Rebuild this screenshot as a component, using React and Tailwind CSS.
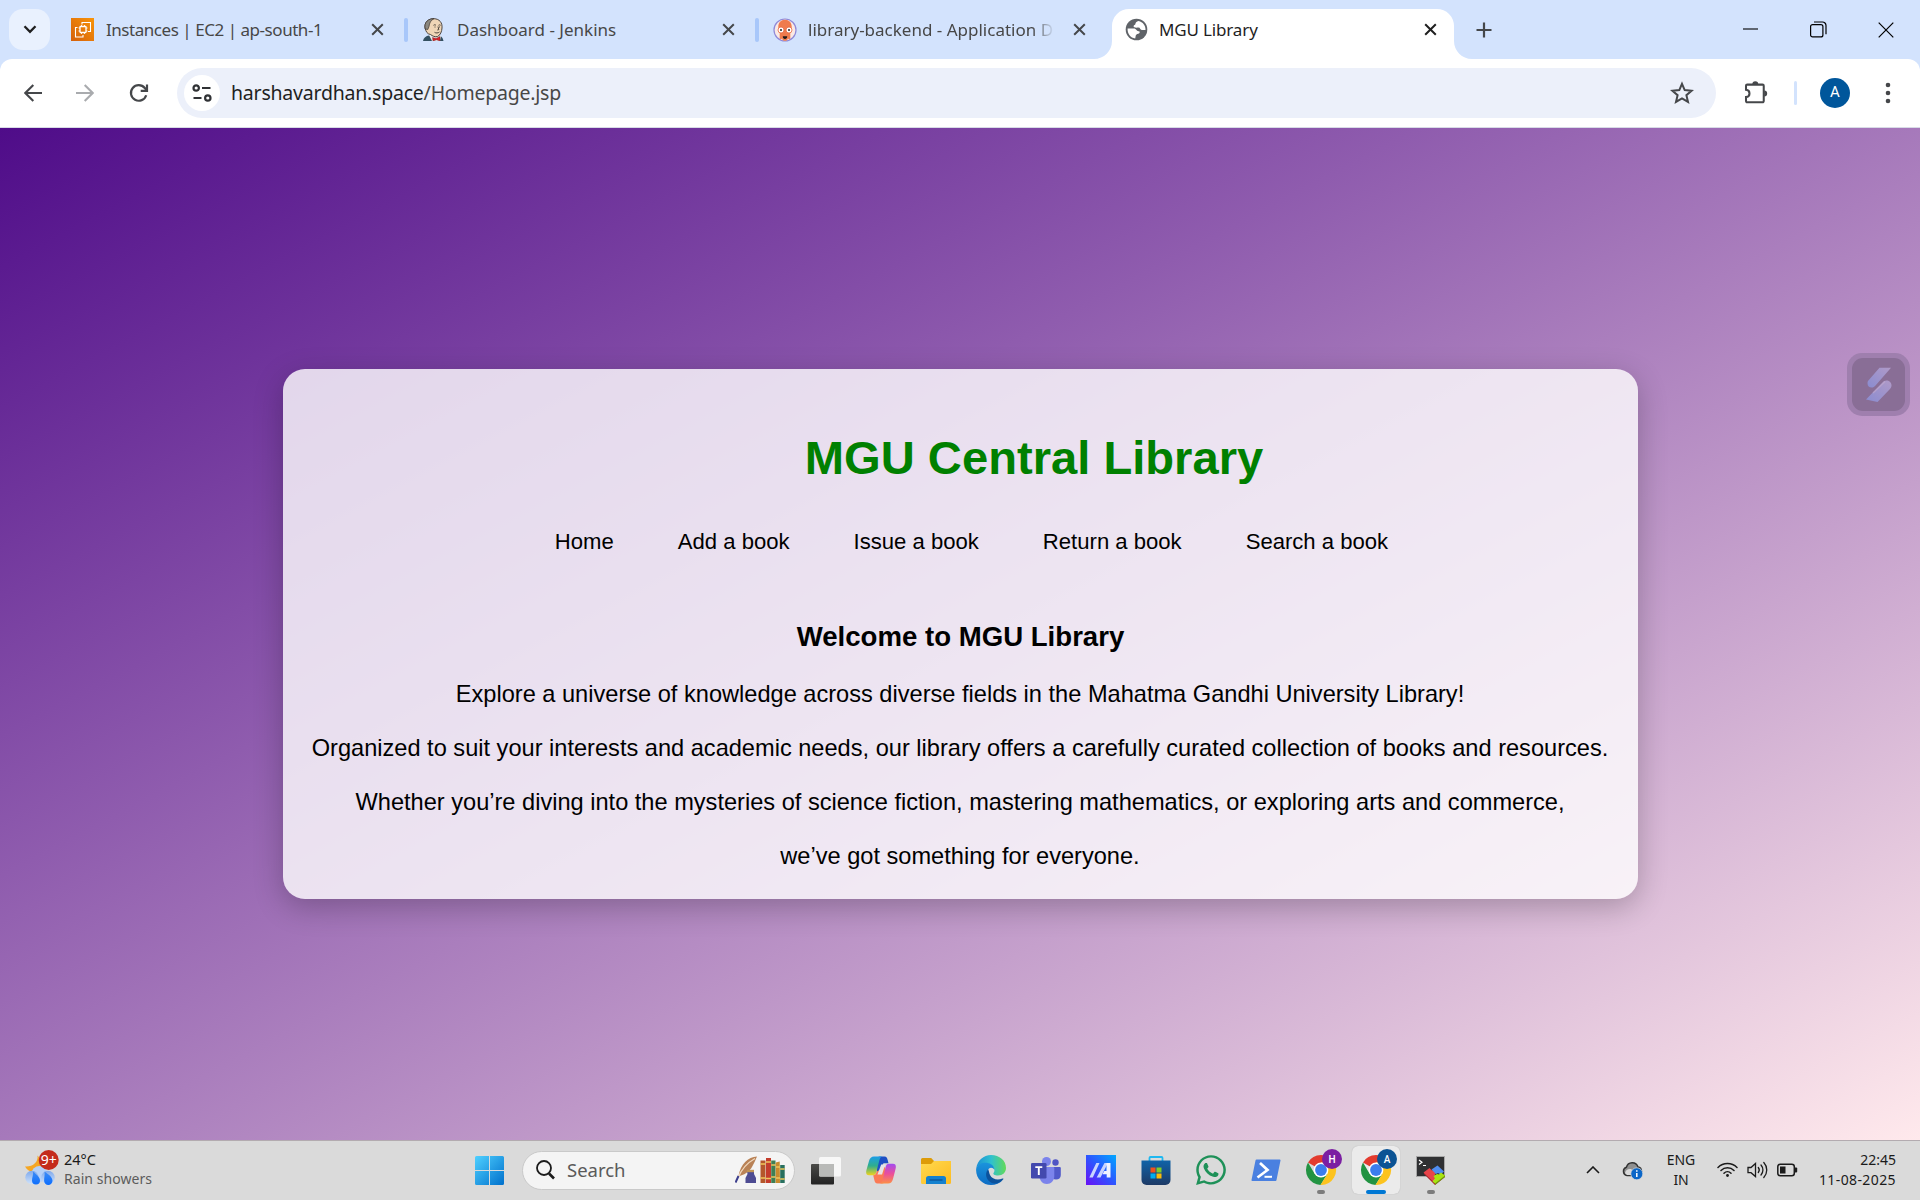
import React from "react";
import { FaWhatsapp } from "react-icons/fa";

const UI = "font-['Noto_Sans','Open_Sans',sans-serif]";

/* ---------- favicons ---------- */
const Ec2Icon = () => (
  <svg width="23" height="23" viewBox="0 0 23 23">
    <defs>
      <linearGradient id="ec2" x1="0" y1="1" x2="1" y2="0">
        <stop offset="0" stopColor="#d4600c" />
        <stop offset="1" stopColor="#f99408" />
      </linearGradient>
    </defs>
    <rect width="23" height="23" fill="url(#ec2)" />
    <g fill="none" stroke="#fff" strokeWidth="1.1">
      <path d="M11 6.5V4.5h8.5v9h-2.5M6.5 9.500H4.500v9.500h7.500v-2" />
      <rect x="9" y="8.500" width="6" height="6" rx=".5" strokeWidth="1.3" />
      <path d="M10.500 8.500V7M13.500 8.500V7M10.500 16v-1.500M13.500 16v-1.500M9 10H7.500M9 13H7.500M16.500 10H15M16.500 13H15" strokeWidth=".9" />
    </g>
  </svg>
);

const JenkinsIcon = () => (
  <svg width="23" height="23" viewBox="0 0 23 23">
    <path d="M1 23c.5-3.500 3-5 6-5.500l9-.5c3 .5 5 2.500 5.500 6z" fill="#335061" />
    <path d="M7 17l3 6h8l1-5-4-1.500z" fill="#e9e9e9" />
    <path d="M3 10C2 4 7 .5 12 .700c5.500.2 8.500 4 8 9.300-.2 3.500-1.500 7-4.500 8.500-2.500.8-5-.5-7-2C5 16 4 13.500 3 10z" fill="#f0d6b7" stroke="#3c3530" strokeWidth=".9" />
    <path d="M3.200 11C1.700 4 6.500.500 12 .600 8.500 2.500 7.500 5 7 8.500l-1.200 3z" fill="#8b8880" stroke="#3c3530" strokeWidth=".7" />
    <path d="M11.500 7.300c.8-.7 1.700-.6 2.500 0M16.500 7.300c.8-.6 1.500-.5 2.200 0M12.500 9h1M17 9h1M16 8.500l.8 3.200-1.500.3M12.500 14.300c1.500 1 3.500.8 5-.3" fill="none" stroke="#3c3530" strokeWidth=".9" />
    <path d="M10.500 19.500l3.500 1 4-2v4.500l-3.500-1.200L11 23z" fill="#d9252c" stroke="#6b1518" strokeWidth=".4" />
  </svg>
);

const ArgoIcon = () => (
  <svg width="24" height="24" viewBox="0 0 24 24">
    <circle cx="12" cy="12" r="11" fill="#fbe9e4" stroke="#8f88d8" strokeWidth="1.200" />
    <path d="M12 1.800c4.200 0 6.700 3 6.700 6.800 0 3-.9 4.500-1.400 6v5.200c0 2-2 1.700-2.300.4-.4 1.800-1.400 2.600-3 2.600s-2.600-.8-3-2.600c-.3 1.300-2.300 1.600-2.300-.4v-5.200c-.5-1.500-1.400-3-1.400-6C5.300 4.800 7.800 1.800 12 1.800z" fill="#ef7b4d" />
    <circle cx="8" cy="12" r="3" fill="#fff" stroke="#e9653f" strokeWidth=".8" />
    <circle cx="16" cy="12" r="3" fill="#fff" stroke="#e9653f" strokeWidth=".8" />
    <circle cx="8" cy="12" r="1" fill="#222" />
    <circle cx="16" cy="12" r="1" fill="#222" />
    <path d="M9.800 18.200h4.400c0 1.800-.9 2.800-2.200 2.800s-2.200-1-2.200-2.800z" fill="#201b1b" />
  </svg>
);

const GlobeIcon = () => (
  <svg width="23" height="23" viewBox="0 0 23 23">
    <circle cx="11.500" cy="11.500" r="10.800" fill="#5f6368" />
    <path d="M2.600 10.500h6.200c2.400 0 2.600 2.700 4.700 2.700 1.800 0 1.500 2.200-.2 2.600-1.800.4-2.600 1-2.800 3.300l-.3 1.300C5.500 20 2.300 15.800 2.600 10.500z" fill="#fff" />
    <path d="M13.600 2.900c-2.400.4-3 1.700-3.200 3.200-.2 1.200-1.800.8-1.800 2.200 0 1.800 3.300 1.300 4.800 1.300 2 0 1.600 2.300 3.400 2.300h3.700c.2-4.500-2.700-8-6.900-9z" fill="#fff" />
  </svg>
);

const CloseX = ({ c = "#45474a" }) => (
  <svg width="13" height="13" viewBox="0 0 13 13" className="shrink-0">
    <path d="M1.200 1.200l10.600 10.600M11.800 1.200L1.200 11.800" stroke={c} strokeWidth="2" />
  </svg>
);

/* ---------- browser tabs ---------- */
function Tab({ icon, title, track = "", fade, sep }) {
  return (
    <div className="flex h-[59px] w-[351px] shrink-0 items-center pl-3">
      <div className="flex w-[35px] shrink-0 items-center">{icon}</div>
      <div className={"w-[249px] whitespace-nowrap text-[17px] leading-6 text-[#474747] " + track}>
        <span className={fade ? "block [mask-image:linear-gradient(90deg,#000_90%,transparent_99%)]" : "block"}>{title}</span>
      </div>
      <div className="ml-4 flex w-[30px] shrink-0">
        <CloseX />
      </div>
      {sep && <div className="ml-[3px] h-6 w-1 rounded-full bg-[#a8c7fa]" />}
    </div>
  );
}

function TabStrip() {
  return (
    <div className="flex h-[59px] items-center bg-[#d3e3fd] pl-[9px]">
      <button className="mr-[9px] flex h-[41px] w-[41px] shrink-0 items-center justify-center rounded-[14px] bg-[#e9f1fe]">
        <svg width="14" height="9" viewBox="0 0 14 9">
          <path d="M1.500 1.300L7 6.800l5.500-5.500" fill="none" stroke="#1f1f1f" strokeWidth="2.300" />
        </svg>
      </button>
      <Tab icon={<Ec2Icon />} title="Instances | EC2 | ap-south-1" track="tracking-[-0.46px]" sep />
      <Tab icon={<JenkinsIcon />} title="Dashboard - Jenkins" sep />
      <Tab icon={<ArgoIcon />} title="library-backend - Application D" fade />
      <div className="relative flex h-[50px] w-[342px] shrink-0 items-center self-end rounded-t-[17px] bg-white pb-[9px] pl-[13px]">
        <svg className="absolute -left-[18px] bottom-0" width="18" height="18"><path d="M18 0v18H0c10 0 18-8 18-18z" fill="#fff" /></svg>
        <svg className="absolute -right-[18px] bottom-0" width="18" height="18"><path d="M0 0v18h18C8 18 0 10 0 0z" fill="#fff" /></svg>
        <div className="flex w-[34px] shrink-0"><GlobeIcon /></div>
        <div className="w-[265px] whitespace-nowrap text-[17px] leading-6 tracking-[-0.15px] text-[#1f1f1f]">MGU Library</div>
        <CloseX c="#1f1f1f" />
      </div>
      <svg className="ml-[22px]" width="16" height="16" viewBox="0 0 16 16"><path d="M8 .5v15M.5 8h15" stroke="#45474a" strokeWidth="2.200" /></svg>
      <div className="ml-auto flex items-center pr-[26px] text-black">
        <svg className="mr-px" width="16" height="16" viewBox="0 0 16 16"><path d="M1 7h15" stroke="#000" strokeWidth="1.100" /></svg>
        <svg className="ml-[51px]" width="17" height="17" viewBox="0 0 17 17" fill="none" stroke="#000" strokeWidth="1.200">
          <rect x=".6" y="3.600" width="12.300" height="12.300" rx="2" />
          <path d="M4 1h8.500A3.500 3.500 0 0 1 16 4.500v8.800" />
        </svg>
        <svg className="ml-[51px]" width="16" height="16" viewBox="0 0 16 16"><path d="M.7.700l14.600 14.600M15.300.700L.7 15.300" stroke="#000" strokeWidth="1.200" /></svg>
      </div>
    </div>
  );
}

function Toolbar() {
  return (
    <div className="bg-[#d3e3fd]">
      <div className="flex h-[69px] items-center rounded-t-[12px] border-b border-[#d8dbe6] bg-white pb-px pl-6">
        <svg width="18" height="18" viewBox="0 0 18 18" fill="none" stroke="#45474a" strokeWidth="2.100"><path d="M18 9H1.500M9.300 1L1.300 9l8 8" /></svg>
        <svg className="ml-[34px]" width="18" height="18" viewBox="0 0 18 18" fill="none" stroke="#a9abae" strokeWidth="2.100"><path d="M0 9h16.500M8.700 1l8 8-8 8" /></svg>
        <svg className="ml-[35px]" width="20" height="20" viewBox="0 0 20 20" fill="none" stroke="#45474a" strokeWidth="2.200"><path d="M17.200 12.200A7.800 7.800 0 1 1 15.800 5l1.700 2.200" /><path d="M18 1.500v6.300h-6.300" /></svg>
        <div className="ml-[28px] flex h-[50px] w-[1539px] items-center rounded-full bg-[#ecf0fa] pl-[7px]">
          <div className="flex h-9 w-9 items-center justify-center rounded-full bg-white">
            <svg width="20" height="18" viewBox="0 0 20 18" fill="none" stroke="#303235" strokeWidth="2.200">
              <circle cx="4.200" cy="4" r="2.700" /><path d="M10 4h8.500M1.500 14h8" /><circle cx="15.800" cy="14" r="2.700" />
            </svg>
          </div>
          <div className="ml-[11px] whitespace-nowrap text-[19.5px] leading-7 tracking-[-0.22px] text-[#474747]"><span className="text-[#1f1f1f]">harshavardhan.space</span>/Homepage.jsp</div>
          <svg className="ml-auto mr-[22px]" width="24" height="24" viewBox="0 0 24 24" fill="none" stroke="#45474a" strokeWidth="2"><path d="M12 2.800l2.700 6.300 6.900.6-5.200 4.500 1.600 6.700-6-3.600-6 3.600 1.600-6.700L2.400 9.700l6.900-.6z" /></svg>
        </div>
        <svg className="ml-[27px]" width="27" height="26" viewBox="0 0 27 28">
          <path d="M3.500 5H20a1.300 1.300 0 0 1 1.300 1.300v16.400A1.300 1.300 0 0 1 20 24H3.500a1.300 1.300 0 0 1-1.300-1.300v-4.300c5-.3 5-7.500 0-7.800V6.300A1.300 1.300 0 0 1 3.500 5z" fill="none" stroke="#45474a" strokeWidth="2.200" />
          <path d="M9 4.500a3.200 3.200 0 0 1 6.400 0zM21.800 11.300a3.200 3.200 0 0 1 0 6.400z" fill="#45474a" />
        </svg>
        <div className="ml-[24px] h-6 w-[3px] rounded-full bg-[#d3e3fd]" />
        <div className="ml-[23px] flex h-[30px] w-[30px] items-center justify-center rounded-full bg-[#00569b] font-[Roboto,sans-serif] text-[15px] text-white">A</div>
        <svg className="ml-[35px]" width="6" height="22" viewBox="0 0 6 22" fill="#45474a"><circle cx="3" cy="3" r="2.300" /><circle cx="3" cy="11" r="2.300" /><circle cx="3" cy="19" r="2.300" /></svg>
      </div>
    </div>
  );
}

/* ---------- web page ---------- */
const NAV = ["Home", "Add a book", "Issue a book", "Return a book", "Search a book"];
const LINES = [
  "Explore a universe of knowledge across diverse fields in the Mahatma Gandhi University Library!",
  "Organized to suit your interests and academic needs, our library offers a carefully curated collection of books and resources.",
  "Whether you’re diving into the mysteries of science fiction, mastering mathematics, or exploring arts and commerce,",
  "we’ve got something for everyone.",
];

function Page() {
  return (
    <main className="relative flex h-[1012px] items-center justify-center bg-[linear-gradient(to_bottom_right,#4f0c89,#8f5cae_37%,#ffe9ec)] font-['Liberation_Sans',Arial,sans-serif] text-black">
      <section className="flex h-[530px] w-[1355px] flex-col items-center rounded-[22px] bg-white/80 shadow-[0_8px_30px_rgba(0,0,0,0.24)]">
        <h1 className="mt-[62px] pl-[148px] text-[47.15px] font-bold leading-[54px] text-[#008000]">MGU Central Library</h1>
        <nav className="mt-[44px] flex gap-[64px] pl-[23px] text-[22.1px] leading-[26px]">
          {NAV.map((n) => <a key={n}>{n}</a>)}
        </nav>
        <h3 className="mt-[66px] pl-px text-[27.6px] font-bold leading-8">Welcome to MGU Library</h3>
        <div className="mt-[14px] text-center text-[23.6px] leading-[54px]">
          {LINES.map((l) => <p key={l} className="whitespace-nowrap">{l}</p>)}
        </div>
      </section>
      <div className="absolute right-[10px] top-[225px] flex h-[63px] w-[63px] items-center justify-center rounded-[15px] bg-[#9f7fae]">
        <div className="flex h-[53px] w-[53px] items-center justify-center rounded-[11px] bg-[#896e96]">
          <svg width="28" height="36" viewBox="0 0 28 36">
            <defs>
              <linearGradient id="sw" x1="1" y1="0" x2="0" y2="1"><stop offset="0" stopColor="#b09ac8" /><stop offset="1" stopColor="#8a8cd0" /></linearGradient>
            </defs>
            <path d="M14.500.700H26L10.500 18.500c-2 3-8 3-8-2.300 0-1.700.7-2.700 2-4z" fill="url(#sw)" />
            <path d="M12.500 35L1 32.500 17.500 15.500c2-3.500 9-2.500 9 2.800 0 1.700-.6 2.800-2 4.200z" fill="url(#sw)" />
            <path d="M8 26l12-11.500" stroke="#c3a9cc" strokeWidth="1.500" opacity=".6" />
          </svg>
        </div>
      </div>
    </main>
  );
}

/* ---------- taskbar ---------- */
const Chrome = ({ letter, color }) => (
  <svg width="38" height="38" viewBox="0 0 38 38" className="overflow-visible">
    <path d="M15 23L2 15.500A15 15 0 0 1 28 15.500H15z" fill="#e33b2e" />
    <path d="M15 23l6.500 3.800L14.500 38A15 15 0 0 1 2 15.500l6.600 11.200z" fill="#229342" />
    <path d="M15 23l0-7.500h13A15 15 0 0 1 14.500 38l7-11.200z" fill="#fcc31e" />
    <circle cx="15" cy="23" r="7.400" fill="#fff" />
    <circle cx="15" cy="23" r="5.900" fill="#3b7ded" />
    <circle cx="26" cy="12" r="10" fill={color} />
    <text x="26" y="15.700" textAnchor="middle" fontSize="10" fill="#fff" fontFamily="Roboto, sans-serif" fontWeight="500">{letter}</text>
  </svg>
);

function Slot({ children, dot, active }) {
  return (
    <div className="flex h-[60px] w-[55px] shrink-0 flex-col items-center">
      <div className={"mt-[5px] flex h-12 w-12 items-center justify-center rounded-[6px] " + (active ? "bg-[#ebebeb] shadow-[0_0_1px_#aaa]" : "")}>{children}</div>
      {dot && <div className={active ? "-mt-1 h-1 w-5 rounded-full bg-[#0078d4]" : "-mt-1 h-1 w-2 rounded-full bg-[#7c7c7c]"} />}
    </div>
  );
}

const Defs = () => (
  <defs>
    <linearGradient id="cpA" x1="0" y1="0" x2="0" y2="1"><stop offset="0" stopColor="#1b9de8" /><stop offset=".5" stopColor="#2fae8c" /><stop offset="1" stopColor="#f2d31b" /></linearGradient>
    <linearGradient id="cpB" x1="0" y1="0" x2="0" y2="1"><stop offset="0" stopColor="#a24cf0" /><stop offset=".5" stopColor="#ea4e9c" /><stop offset="1" stopColor="#fd8f45" /></linearGradient>
    <linearGradient id="edA" x1="0" y1="0" x2="1" y2="0"><stop offset="0" stopColor="#1a8fd6" /><stop offset=".5" stopColor="#2fc0cf" /><stop offset="1" stopColor="#62da58" /></linearGradient>
    <linearGradient id="edB" x1="0" y1="0" x2="0" y2="1"><stop offset="0" stopColor="#1a93dc" /><stop offset="1" stopColor="#0d6cc4" /></linearGradient>
    <linearGradient id="fo" x1="0" y1="0" x2="1" y2="1"><stop offset="0" stopColor="#ffd94f" /><stop offset="1" stopColor="#fdbb20" /></linearGradient>
    <linearGradient id="as" x1="0" y1="1" x2="1" y2="0"><stop offset="0" stopColor="#6a10f5" /><stop offset=".5" stopColor="#2d55ff" /><stop offset="1" stopColor="#00a8ff" /></linearGradient>
    <linearGradient id="st" x1="0" y1="0" x2="0" y2="1"><stop offset="0" stopColor="#1063a8" /><stop offset="1" stopColor="#1d3a66" /></linearGradient>
    <linearGradient id="tv" x1="0" y1="0" x2="0" y2="1"><stop offset="0" stopColor="#4a4a48" /><stop offset="1" stopColor="#222" /></linearGradient>
    <linearGradient id="win" x1="0" y1="0" x2="1" y2="1"><stop offset="0" stopColor="#4fd0ff" /><stop offset="1" stopColor="#0070cc" /></linearGradient>
    <linearGradient id="cl" x1="0" y1="0" x2="0" y2="1"><stop offset="0" stopColor="#7fa9ec" /><stop offset="1" stopColor="#cfe2fa" /></linearGradient>
    <linearGradient id="dr" x1="0" y1="0" x2="0" y2="1"><stop offset="0" stopColor="#3e8cf5" /><stop offset="1" stopColor="#0d6efd" /></linearGradient>
  </defs>
);

const TaskView = () => (
  <svg width="30" height="30" viewBox="0 0 30 30"><Defs />
    <rect x="0" y="9" width="23" height="20.500" rx="1" fill="url(#tv)" />
    <rect x="8" y="2" width="22" height="19.500" rx="1.500" fill="#f7f7f7" />
    <path d="M8 9h15v12.500H9.500A1.500 1.500 0 0 1 8 20z" fill="#b9bab8" />
  </svg>
);
const Copilot = () => (
  <svg width="30" height="30" viewBox="0 0 30 30">
    <path d="M18.500 1.500c2 0 2.700 1.500 3.300 4l.7 2.800h-5L11 20l-1-14c.7-3 2-4.500 4-4.500z" fill="#1d4fc4" />
    <path d="M16.500 1.500c-1.500 0-2.500 1.500-3.200 4L10.500 16.500c-.7 2.500-1.500 3.800-3.500 3.800H3c-2.700 0-3.300-2-2.600-5L3 6c.9-3 2.400-4.500 5-4.500z" fill="url(#cpA)" />
    <path d="M11.500 28.500c-2 0-2.700-1.500-3.300-4l-1-4.200c2 0 3-1.500 3.600-3.800L19 12l1 12c-.7 3-2 4.500-4 4.500z" fill="#fb7a55" />
    <path d="M13.500 28.500c1.500 0 2.500-1.500 3.200-4l2.800-12c.7-2.800 1.500-3.800 3.500-3.800h4c2.700 0 3.300 2 2.600 5L27 24c-.9 3-2.400 4.500-5 4.500z" fill="url(#cpB)" />
    <path d="M15.200 9.500h4L16 19.500h-4.500z" fill="#e7e4e6" />
  </svg>
);
const Folder = () => (
  <svg width="30" height="30" viewBox="0 0 30 30">
    <path d="M0 4.500A1.500 1.500 0 0 1 1.500 3h8.700L13 6h17v6H0z" fill="#dd9b08" />
    <path d="M0 9h10l3-3h17v21.500a1.500 1.500 0 0 1-1.500 1.500h-27A1.500 1.500 0 0 1 0 27.500z" fill="url(#fo)" />
    <path d="M5 29v-5.500A2.500 2.500 0 0 1 7.500 21h15a2.500 2.500 0 0 1 2.500 2.500V29z" fill="#1481cf" />
    <path d="M8.500 25h13" stroke="#0b4f92" strokeWidth="1.200" />
  </svg>
);
const Edge = () => (
  <svg width="30" height="30" viewBox="0 0 30 30">
    <path d="M.3 13C1.500 5.500 7.500 0 15 0c8.500 0 15 5.500 15 13 0 4.500-3.300 7.500-8 7.500-3.500 0-5.200-1.300-4.500-2.500 2.200-2.500.5-6.800-4-8.500-5-1.500-10-.5-13.200 3.500z" fill="url(#edA)" />
    <path d="M.2 13.500C2 9 7.500 7 12.500 8.200c3.500.8 6 3.500 5.800 6.600-1-2.300-4-2.800-5.500-1-2.700 3.200-1.500 9.700 4.200 12.200 3 1.300 6.500.8 9.500-.7C24 28.500 19.500 30 15 30 6.500 30-.8 23 .2 13.500z" fill="url(#edB)" />
    <path d="M12 14.300c-4.500 5.500-.5 13.700 6.500 14.200 3.500.2 6.500-1.700 8.800-4.300.5-.6-.2-1-.8-.7-5 2.500-10.500.5-12.500-3.500-.9-2-.9-4.200-2-5.700z" fill="#0c529c" />
  </svg>
);
const Teams = () => (
  <svg width="30" height="30" viewBox="0 0 30 30">
    <circle cx="24.500" cy="7.500" r="3.200" fill="#4f55c4" />
    <path d="M20 12h8.500c.8 0 1.300.5 1.300 1.300V20c0 3-2 4.500-4.800 4.500S20 23 20 20z" fill="#5059c9" />
    <circle cx="15.500" cy="6.500" r="4.500" fill="#7b83eb" />
    <path d="M8.500 12H22c.8 0 1.300.5 1.300 1.300V21c0 4.500-3.300 8-7.500 8s-7.300-3.500-7.300-8z" fill="#7b83eb" />
    <rect x="0" y="8" width="15.500" height="15.500" rx="1.300" fill="#4349ae" />
    <path d="M4.300 12.100h7M7.800 12.100v8" stroke="#fff" strokeWidth="1.900" />
  </svg>
);
const MyAsus = () => (
  <svg width="30" height="30" viewBox="0 0 30 30">
    <rect width="30" height="30" fill="url(#as)" />
    <path d="M10.300 8h3.200L6.800 22.500H3.300zM18.500 8H22l-7.500 14.500h-3.800z" fill="#c9d4ff" />
    <path d="M20.500 8h4v14.500h-3.800v-3.200h-4.200l1.800-3.300h2.200z" fill="#f0f3ff" />
  </svg>
);
const Store = () => (
  <svg width="30" height="30" viewBox="0 0 30 30">
    <path d="M8.500 6V3a1 1 0 0 1 1-1h11a1 1 0 0 1 1 1v3" fill="none" stroke="#1fb8f0" strokeWidth="1.800" />
    <path d="M.5 5.500h29V25a5 5 0 0 1-5 5h-19a5 5 0 0 1-5-5z" fill="url(#st)" />
    <rect x="9.500" y="12.500" width="5" height="5" fill="#f1511b" /><rect x="15.500" y="12.500" width="5" height="5" fill="#80cc28" />
    <rect x="9.500" y="18.500" width="5" height="5" fill="#00adef" /><rect x="15.500" y="18.500" width="5" height="5" fill="#fbbc09" />
  </svg>
);
const PowerShell = () => (
  <svg width="30" height="30" viewBox="0 0 30 30">
    <path d="M5.500 4.500h23.200c.6 0 .9.4.8 1l-4 19.500c-.1.600-.6 1-1.200 1H1.300c-.6 0-.9-.4-.8-1l4-19.500c.1-.6.500-1 1-1z" fill="#4a80e0" />
    <path d="M9 8l7.500 7L6.500 22.500" fill="none" stroke="#fff" strokeWidth="2.700" />
    <path d="M13.500 21.800h7.500" stroke="#fff" strokeWidth="2" />
  </svg>
);
const Moba = () => (
  <svg width="30" height="30" viewBox="0 0 30 30" className="overflow-visible">
    <rect x=".5" y="1.500" width="28" height="20" fill="#2f3032" stroke="#a8a8a8" strokeWidth="1" />
    <path d="M3 5l3 2.300-3 2.300M7 10.500h3" fill="none" stroke="#fff" strokeWidth="1.200" />
    <path d="M8 19l11 11 10-8v-2l-10 7L8 17z" fill="#a3262c" />
    <path d="M19 27l10-7v2l-10 8z" fill="#6f9b0c" />
    <path d="M7.500 17.500l6-4.500 2.500 2.500 2-.5 2 3-1.500 2.500 2.500 2-4.500 3.500z" fill="#e8444a" />
    <path d="M15.500 14.500l6-4 6.500 6-3.500 3-2.500-1.500-2 1-2.500-2.500z" fill="#4f8df0" />
    <path d="M16.500 26.500l2.500-3-1.500-2.500 3.500-2 2 .500 2-2 4 3-10 8z" fill="#a9e410" />
  </svg>
);

const QuillBooks = () => (
  <svg width="50" height="28" viewBox="0 0 50 28">
    <path d="M22 .500C13 1 5.500 8 3.500 20c5-.5 11-4 14-10 1.700-3 3-6 4.500-9.500z" fill="#b98256" />
    <path d="M20 2.500C12 7 6 14 3 22" fill="none" stroke="#f0d8bd" strokeWidth="1.300" />
    <path d="M3.500 20L.5 26.500" stroke="#3a3c8c" strokeWidth="2" />
    <path d="M12 15h7v3l2 4v5H10.500v-5l2-4z" fill="#4d4b92" /><rect x="12" y="13.800" width="7" height="2.400" fill="#c09456" />
    <rect x="25.500" y="4.500" width="5" height="22.500" fill="#b4572b" /><rect x="31" y="2" width="5" height="25" fill="#c43c2c" />
    <rect x="36.200" y="4.500" width="4.300" height="22.500" fill="#3f7f54" /><path d="M40.700 6.500l4-1L45 27h-4.300z" fill="#c88a2c" /><rect x="45.200" y="9" width="4.500" height="18" fill="#28705f" />
    <path d="M25.500 8h5M25.500 22h5M31 6h5M31 22.500h5M36.200 9h4.300M36.200 21h4.300M41 11h4M41 22h4M45.200 13h4.500M45.200 23h4.500" stroke="#efc65a" strokeWidth="1.300" />
  </svg>
);

function Taskbar() {
  return (
    <footer className="flex h-[60px] items-center border-t border-[#b3abb0] bg-[#dadada] text-[14px] text-[#1b1b1b]">
      <div className="flex w-[474px] items-center pb-[3px] pl-6">
        <svg width="36" height="38" viewBox="0 0 36 38" className="-mt-[5px] overflow-visible">
          <path d="M13.500 7.500C14.500 14 9 19 1 18.500c1.500 3 4.500 5 8 5l9-4-1-8z" fill="#f5a623" />
          <circle cx="15.500" cy="26" r="8" fill="#b5d0f7" />
          <circle cx="8" cy="29.500" r="6.700" fill="url(#cl)" /><circle cx="24" cy="29.500" r="6.800" fill="url(#cl)" />
          <path d="M9 23.500c3.500 3 7 5.500 7 9a4 4 0 0 1-8 0c0-3 1.500-5.500 1-9zM20.500 23.500c4 3 8 5.500 8 9.300a4.200 4.200 0 0 1-8.400 0c0-3.200.9-6 .4-9.300z" fill="url(#dr)" />
          <circle cx="24.700" cy="12" r="10" fill="#c42b1c" />
          <text x="24.700" y="16.700" textAnchor="middle" fontSize="14" fill="#fff" fontFamily="Noto Sans, sans-serif">9+</text>
        </svg>
        <div className="ml-1 leading-5">
          <div className="text-[14.500px]">24°C</div>
          <div className="tracking-[0.05px] text-[#5c5c5c]">Rain showers</div>
        </div>
      </div>
      <svg width="31" height="31" viewBox="0 0 31 31" className="shrink-0">
        <path d="M2.500 1H15v14H1V2.500A1.500 1.500 0 0 1 2.500 1zM16 1h12.500A1.500 1.500 0 0 1 30 2.500V15H16zM1 16h14v14H2.500A1.500 1.500 0 0 1 1 28.500zM16 16h14v12.500a1.500 1.500 0 0 1-1.500 1.500H16z" fill="url(#win)" />
      </svg>
      <div className="-mt-px ml-[17px] flex h-[39px] w-[273px] shrink-0 items-center rounded-full border border-[#c9c9c9] bg-[#f4f4f4] pl-[13px]">
        <svg width="19" height="20" viewBox="0 0 19 20" fill="none" stroke="#1b1b1b"><circle cx="8" cy="8" r="7" strokeWidth="1.800" /><path d="M13 13.500l5 5" strokeWidth="2.600" /></svg>
        <span className="ml-[12px] text-[18.500px] text-[#5a5a5a]">Search</span>
        <span className="ml-auto mr-[9px]"><QuillBooks /></span>
      </div>
      <div className="ml-[3px] flex h-full items-center">
        <Slot><TaskView /></Slot>
        <Slot><Copilot /></Slot>
        <Slot><Folder /></Slot>
        <Slot><Edge /></Slot>
        <Slot><Teams /></Slot>
        <Slot><MyAsus /></Slot>
        <Slot><Store /></Slot>
        <Slot><FaWhatsapp size={34} color="#1e9158" className="shrink-0" /></Slot>
        <Slot><PowerShell /></Slot>
        <Slot dot><div className="-mt-2 ml-2"><Chrome letter="H" color="#7b1fa2" /></div></Slot>
        <Slot dot active><div className="-mt-2 ml-2"><Chrome letter="A" color="#0b5394" /></div></Slot>
        <Slot dot><Moba /></Slot>
      </div>
      <div className="ml-auto flex items-center pb-px pr-[24px]">
        <svg width="14" height="8" viewBox="0 0 14 8"><path d="M1 7l6-6 6 6" fill="none" stroke="#1b1b1b" strokeWidth="1.600" /></svg>
        <svg className="ml-[22px]" width="21" height="19" viewBox="0 0 21 19">
          <path d="M5 14.500a4.300 4.300 0 0 1-.6-8.300C6 .5 14 0 16 6c2.500.3 3.500 2 3.500 4.500l-3 4z" fill="#8f8f8f" stroke="#333" strokeWidth="1.500" />
          <path d="M3 12c1-4 5-5.500 9-2.500l-3 4.500H5z" fill="#d9d9d9" />
          <circle cx="14.800" cy="12.800" r="6" fill="#0a66c8" stroke="#dadada" strokeWidth=".7" />
          <path d="M14.800 12v4M14.800 9.300v1.500" stroke="#fff" strokeWidth="1.500" />
        </svg>
        <div className="ml-[23px] w-[30px] text-center leading-5 tracking-[-0.1px]">ENG<br />IN</div>
        <svg className="ml-[21px]" width="21" height="16" viewBox="0 0 21 16" fill="none" stroke="#1b1b1b" strokeWidth="1.500" strokeLinecap="round">
          <path d="M1 5.500a13.500 13.500 0 0 1 19 0M4 8.500a9.300 9.300 0 0 1 13 0M7 11.200a5 5 0 0 1 7 0" /><circle cx="10.500" cy="13.500" r="1.400" fill="#1b1b1b" stroke="none" />
        </svg>
        <svg className="ml-[9px]" width="21" height="18" viewBox="0 0 21 18" fill="none" stroke="#1b1b1b" strokeWidth="1.300" strokeLinecap="round">
          <path d="M1 6.500h3L8.500 2.500v13L4 11.700H1zM11.300 6.500a4 4 0 0 1 0 5M14 4a7.500 7.500 0 0 1 0 10M16.800 1.500a11 11 0 0 1 0 15" />
        </svg>
        <svg className="ml-[9px]" width="21" height="14" viewBox="0 0 21 14"><rect x=".8" y="1.300" width="16.500" height="11.400" rx="2.500" fill="none" stroke="#1b1b1b" strokeWidth="1.500" /><rect x="3" y="3.500" width="5.500" height="7" fill="#1b1b1b" /><path d="M18 4.500h1.200a1 1 0 0 1 1 1v3a1 1 0 0 1-1 1H18z" fill="#1b1b1b" /></svg>
        <div className="ml-[20px] w-[78px] whitespace-nowrap text-right leading-5"><div>22:45</div><div className="tracking-[0.4px]">11-08-2025</div></div>
      </div>
    </footer>
  );
}

export default function App() {
  return (
    <div className={"h-[1200px] w-[1920px] overflow-hidden " + UI}>
      <TabStrip />
      <Toolbar />
      <Page />
      <Taskbar />
    </div>
  );
}
